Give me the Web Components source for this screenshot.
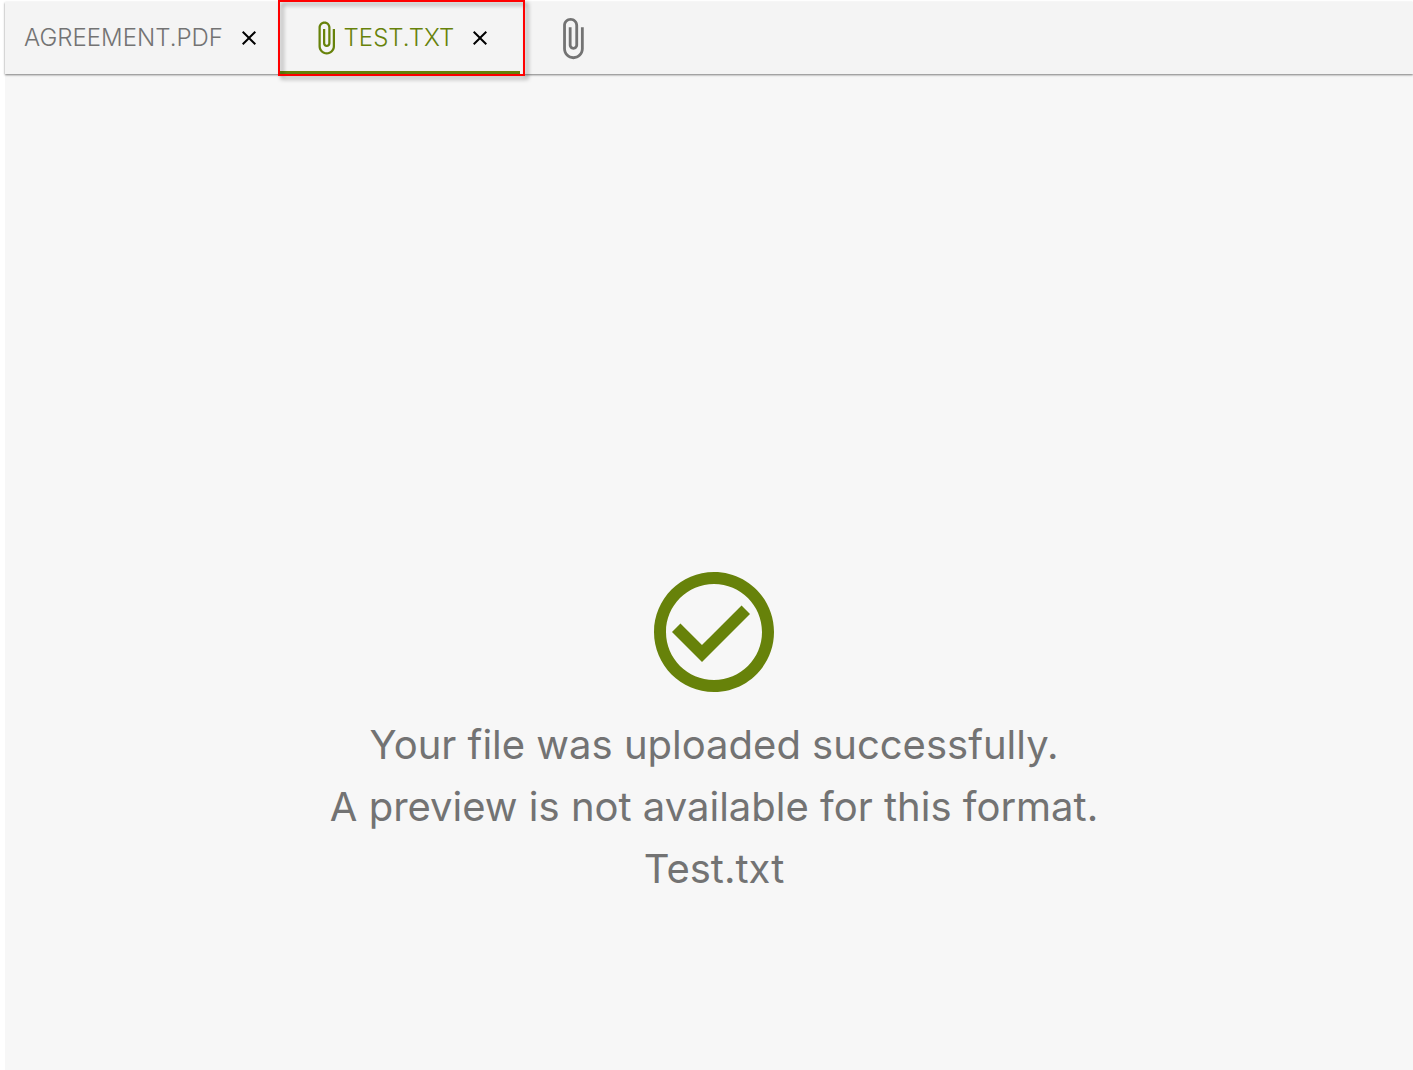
<!DOCTYPE html>
<html lang="en">
<head>
<meta charset="utf-8">
<meta name="viewport" content="width=device-width, initial-scale=1">
<title>Attachments</title>
<style>
html, body {
	height: 100%;
	margin: 0;
	background: #fff;
	font-family: Inter, "Liberation Sans", sans-serif;
}
</style>
</head>
<body>
<file-viewer>
	<tab-bar slot="tabs">
		<file-tab>AGREEMENT.PDF</file-tab>
		<file-tab selected attachment highlighted>TEST.TXT</file-tab>
		<attach-button></attach-button>
	</tab-bar>
	<upload-status filename="Test.txt">
		<p>Your file was uploaded successfully.</p>
		<p>A preview is not available for this format.</p>
	</upload-status>
</file-viewer>

<script>
const clipPath = 'M16.5 6v11.5c0 2.21-1.79 4-4 4s-4-1.79-4-4V5c0-1.38 1.12-2.5 2.5-2.5s2.5 1.12 2.5 2.5v10.5c0 .55-.45 1-1 1s-1-.45-1-1V6H10v9.5c0 1.38 1.12 2.5 2.5 2.5s2.5-1.12 2.5-2.5V5c0-2.21-1.79-4-4-4S7 2.79 7 5v12.5c0 3.04 2.46 5.5 5.5 5.5s5.5-2.46 5.5-5.5V6h-1.5z';

const buttonStyles = `
button {
	margin: 0;
	padding: 0;
	border: 0;
	background: none;
	color: inherit;
	font: inherit;
	cursor: pointer;
}

svg {
	display: block;
	flex: none;
	fill: currentColor;
}
`;

class FileViewer extends HTMLElement {
	constructor() {
		super();
		this.attachShadow({ mode: 'open' });
		this.shadowRoot.innerHTML = `
<style>
:host {
	display: flex;
	flex-direction: column;
	box-sizing: border-box;
	min-height: 100%;
	padding: 2px 0 0 5px;
}

main {
	flex: 1;
	background: #f7f7f7;
}
</style>
<slot name="tabs"></slot>
<main><slot></slot></main>
`;
	}
}

class TabBar extends HTMLElement {
	constructor() {
		super();
		this.attachShadow({ mode: 'open' });
		this.shadowRoot.innerHTML = `
<style>
:host {
	display: block;
	position: relative;
	background: #f4f4f4;
	box-shadow: 0 1px 2px rgba(0, 0, 0, 0.5);
}

nav {
	display: flex;
	height: 72px;
}
</style>
<nav aria-label="Files"><slot></slot></nav>
`;
	}
}

class FileTab extends HTMLElement {
	constructor() {
		super();
		this.attachShadow({ mode: 'open' });
	}

	connectedCallback() {
		this.render();
	}

	render() {
		const icon = this.hasAttribute('attachment')
			? `<svg width="36" height="36" viewBox="0 0 24 24" aria-hidden="true"><path d="${clipPath}"/></svg>`
			: '';

		this.shadowRoot.innerHTML = `
<style>
${buttonStyles}
:host {
	display: flex;
	position: relative;
	box-sizing: border-box;
	align-items: center;
	justify-content: center;
	gap: 14px;
	min-width: 240px;
	padding: 0 19px;
	color: #737373;
	font-size: 24px;
	font-weight: 300;
	line-height: 36px;
}

:host([selected]) {
	border-bottom: 3px solid #67820a;
	padding-top: 3px;
	color: #67820a;
}

/* callout frame, sits over the tab and the edge of the bar */
:host([highlighted])::after {
	content: "";
	position: absolute;
	inset: -2px -5px -5px -2px;
	border: 2px solid #f00;
	filter: drop-shadow(3px 3px 2px rgba(0, 0, 0, 0.4));
	pointer-events: none;
}

.label {
	display: flex;
	align-items: center;
}

.close {
	color: #000;
}
</style>
<button class="label" type="button">${icon}<span><slot></slot></span></button>
<button class="close" type="button" aria-label="Close">
	<svg width="24" height="24" viewBox="0 0 24 24" aria-hidden="true"><path d="M19 6.41L17.59 5 12 10.59 6.41 5 5 6.41 10.59 12 5 17.59 6.41 19 12 13.41 17.59 19 19 17.59 13.41 12z"/></svg>
</button>
`;
	}
}

class AttachButton extends HTMLElement {
	constructor() {
		super();
		this.attachShadow({ mode: 'open' });
		this.shadowRoot.innerHTML = `
<style>
${buttonStyles}
:host {
	display: flex;
	align-items: center;
	padding: 0 30px;
	color: #737373;
}
</style>
<button type="button" aria-label="Add attachment">
	<svg width="45" height="45" viewBox="0 0 24 24" aria-hidden="true"><path d="${clipPath}"/></svg>
</button>
`;
	}
}

class UploadStatus extends HTMLElement {
	constructor() {
		super();
		this.attachShadow({ mode: 'open' });
		this.shadowRoot.innerHTML = `
<style>
:host {
	display: flex;
	flex-direction: column;
	align-items: center;
	padding: 486px 0 0 10px;
	color: #737373;
	font-size: 40px;
	line-height: 62px;
	text-align: center;
}

svg {
	display: block;
	margin-bottom: 10px;
	fill: #67820a;
}

p, ::slotted(p) {
	margin: 0;
}
</style>
<svg width="144" height="144" viewBox="0 0 24 24" aria-hidden="true">
	<path d="M16.59 7.58L10 14.17l-3.59-3.58L5 12l5 5 8-8zM12 2C6.48 2 2 6.48 2 12s4.48 10 10 10 10-4.48 10-10S17.52 2 12 2zm0 18c-4.42 0-8-3.58-8-8s3.58-8 8-8 8 3.58 8 8-3.58 8-8 8z"/>
</svg>
<slot></slot>
<p id="filename"></p>
`;
	}

	static get observedAttributes() {
		return ['filename'];
	}

	attributeChangedCallback(attrName, oldValue, newValue) {
		this.shadowRoot.querySelector('#filename').textContent = newValue;
	}
}

window.customElements.define('file-viewer', FileViewer);
window.customElements.define('tab-bar', TabBar);
window.customElements.define('file-tab', FileTab);
window.customElements.define('attach-button', AttachButton);
window.customElements.define('upload-status', UploadStatus);
</script>
</body>
</html>
